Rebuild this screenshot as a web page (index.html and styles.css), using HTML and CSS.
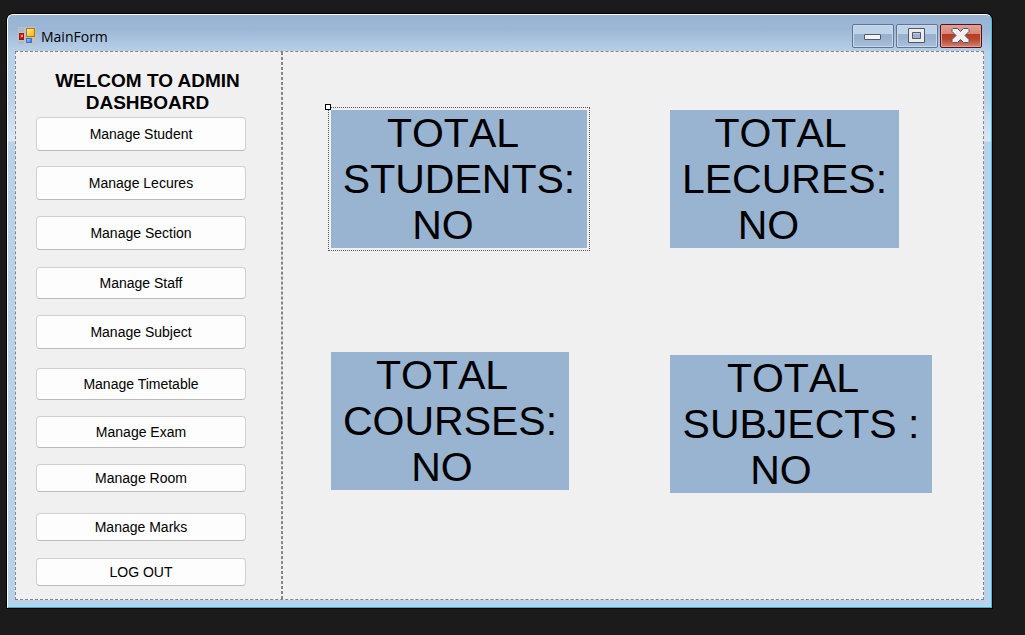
FILE: index.html
```html
<!DOCTYPE html>
<html lang="en">
<head>
<meta charset="utf-8">
<title>MainForm</title>
<link rel="stylesheet" href="styles.css">
</head>
<body>
<div class="window">
  <header class="titlebar">
    <svg class="app-icon" width="18" height="18" viewBox="0 0 18 18" aria-hidden="true">
      <defs>
        <linearGradient id="gold" x1="0" y1="0" x2="1" y2="1"><stop offset="0" stop-color="#ffe98a"/><stop offset="1" stop-color="#f2b70c"/></linearGradient>
        <linearGradient id="sky" x1="0" y1="0" x2="1" y2="1"><stop offset="0" stop-color="#9cc4ff"/><stop offset="1" stop-color="#3c78e0"/></linearGradient>
      </defs>
      <path fill="#bfc1c6" d="M0 0h18v18H0z"/>
      <path fill="#a9bcd6" d="M1 1h5v4H1zM1 14h5v3H1z"/>
      <path fill="#a81508" d="M1 6h5v7H1z"/><path fill="#d62c18" d="M2 7h3v4H2z"/><path fill="#f3a090" d="M3 8h2v2H3z"/>
      <path fill="#b17a08" d="M8 1h9v9H8z"/><path fill="url(#gold)" d="M9 2h7v7H9z"/>
      <path fill="#3970d2" d="M8 11h6v5H8z"/><path fill="url(#sky)" d="M9 12h4v3H9z"/>
    </svg>
    <h1 class="title">MainForm</h1>
    <div class="controls">
      <button class="control" type="button" aria-label="Minimize">
        <svg width="40" height="22" viewBox="0 0 40 22"><rect x="11.500" y="9.500" width="16" height="5" rx=".5" fill="#f4f4f0" stroke="#535666"/></svg>
      </button>
      <button class="control" type="button" aria-label="Maximize">
        <svg width="40" height="22" viewBox="0 0 40 22"><path fill="#ececec" fill-rule="evenodd" stroke="#535666" d="M11.500 3.500h16v14h-16zM15.500 7.500v6h8v-6z"/></svg>
      </button>
      <button class="control control-close" type="button" aria-label="Close">
        <svg width="40" height="22" viewBox="0 0 40 22"><path fill="#f1f1f1" stroke="#535666" stroke-linejoin="round" d="M12 3.500h4.500l3 3 3-3H27l1 1v2l-4 4 4 4v2l-1 1h-4.500l-3-3-3 3H12l-1-1v-2l4-4-4-4v-2z"/></svg>
      </button>
    </div>
  </header>
  <div class="client">
    <aside class="sidebar">
      <h2 class="welcome">WELCOM TO ADMIN DASHBOARD</h2>
      <nav class="menu">
        <button class="item tall" type="button">Manage Student</button>
        <button class="item tall" type="button">Manage Lecures</button>
        <button class="item tall" type="button">Manage Section</button>
        <button class="item" type="button">Manage Staff</button>
        <button class="item tall" type="button">Manage Subject</button>
        <button class="item" type="button">Manage Timetable</button>
        <button class="item" type="button">Manage Exam</button>
        <button class="item short" type="button">Manage Room</button>
        <button class="item short" type="button">Manage Marks</button>
        <button class="item short" type="button">LOG OUT</button>
      </nav>
    </aside>
    <main class="stats">
      <section class="card students selected"><span class="handle"></span><span class="label">TOTAL</span><span>STUDENTS:</span><span class="value">NO</span></section>
      <section class="card lectures"><span class="label">TOTAL</span><span>LECURES:</span><span class="value">NO</span></section>
      <section class="card courses"><span class="label">TOTAL</span><span>COURSES:</span><span class="value">NO</span></section>
      <section class="card subjects"><span class="label">TOTAL</span><span>SUBJECTS :</span><span class="value">NO</span></section>
    </main>
  </div>
</div>
</body>
</html>
```
FILE: styles.css
```css
* { box-sizing: border-box; }

body {
  margin: 0;
  min-height: 100vh;
  display: flex;
  padding: 14px 33px 27px 7px;
  background: #1b1b1b;
  color: #000;
  font-family: "Liberation Sans", Arial, sans-serif;
}

.window {
  flex: 1;
  display: flex;
  flex-direction: column;
  padding: 0 7px 7px;
  border: 1px solid #fff;
  border-right-color: #35c3e0;
  border-bottom-color: #35b5d6;
  border-radius: 6px 6px 0 0;
  box-shadow: 0 0 0 1px #000;
  background: linear-gradient(#99b4d1 0, #9cb7d6 14px, #b9d1ea 38px, #b9d1ea 80px, #dbe7f5 126px, #b9d1ea 127px);
}

.titlebar {
  display: flex;
  align-items: flex-start;
  height: 36px;
}

.app-icon { margin: 12px 5px 0 3px; }

.title {
  flex: 1;
  margin: 12px 0 0;
  font: 400 14px/20px "Open Sans", "Noto Sans", sans-serif;
}

.controls {
  display: flex;
  gap: 2px;
  margin: 9px 2px 0 0;
}

.control {
  width: 42px;
  height: 24px;
  padding: 0;
  border: 1px solid #64738f;
  border-radius: 2px;
  box-shadow: inset 0 0 0 1px #c7d9ec;
  background: linear-gradient(#bfd3e8 0 42%, #9ab2cd 42% 60%, #a8c1dc);
}

.control svg { display: block; }

.control-close {
  border-color: #4b1520;
  box-shadow: inset 0 0 0 1px #e5a095;
  background: linear-gradient(#e0a297 0, #d98578 42%, #b63d22 42%, #b8472f 65%, #d58070);
}

.client {
  flex: 1;
  display: flex;
  border: 1px dashed #858585;
  background: #f0f0f0;
}

.sidebar {
  width: 266px;
  padding: 18px 35px 0 20px;
  border-right: 1px dashed #858585;
}

.welcome {
  margin: 0 -7px 3px 6px;
  font-size: 19px;
  line-height: 22px;
  text-align: center;
}

.menu {
  display: grid;
  grid-template-rows: 49px 50px 51px 48px 53px 48px 48px 49px 45px 28px;
  align-items: start;
}

.item {
  height: 32px;
  padding: 0;
  border: 1px solid #d0d0d0;
  border-bottom-color: #bababa;
  border-radius: 4px;
  background: #fdfdfd;
  color: #000;
  font: 14px/16px "Liberation Sans", Arial, sans-serif;
}

.item.tall { height: 34px; }
.item.short { height: 28px; }

.stats {
  flex: 1;
  display: grid;
  grid-template-columns: 339fr 313fr;
  grid-template-rows: 242px auto;
  place-items: start;
  padding: 58px 0 0 48px;
  border-left: 1px dashed #858585;
}

.card {
  position: relative;
  display: flex;
  flex-direction: column;
  align-items: center;
  background: #99b4d1;
  font-size: 41px;
  line-height: 46px;
  font-kerning: none;
}

.students { width: 256px; }
.lectures { width: 229px; }
.courses { width: 238px; }
.subjects { width: 262px; margin-top: 3px; }

.label { padding-right: 12px; }
.value { padding-right: 32px; }
.lectures .label { padding-right: 8px; }
.courses .label, .courses .value, .subjects .label { padding-right: 16px; }
.subjects .value { padding-right: 40px; }

.selected {
  outline: 1px dotted #555;
  outline-offset: 2px;
}

.handle {
  position: absolute;
  top: -6px;
  left: -6px;
  width: 6px;
  height: 6px;
  border: 1px solid #000;
  background: #fff;
}
```
